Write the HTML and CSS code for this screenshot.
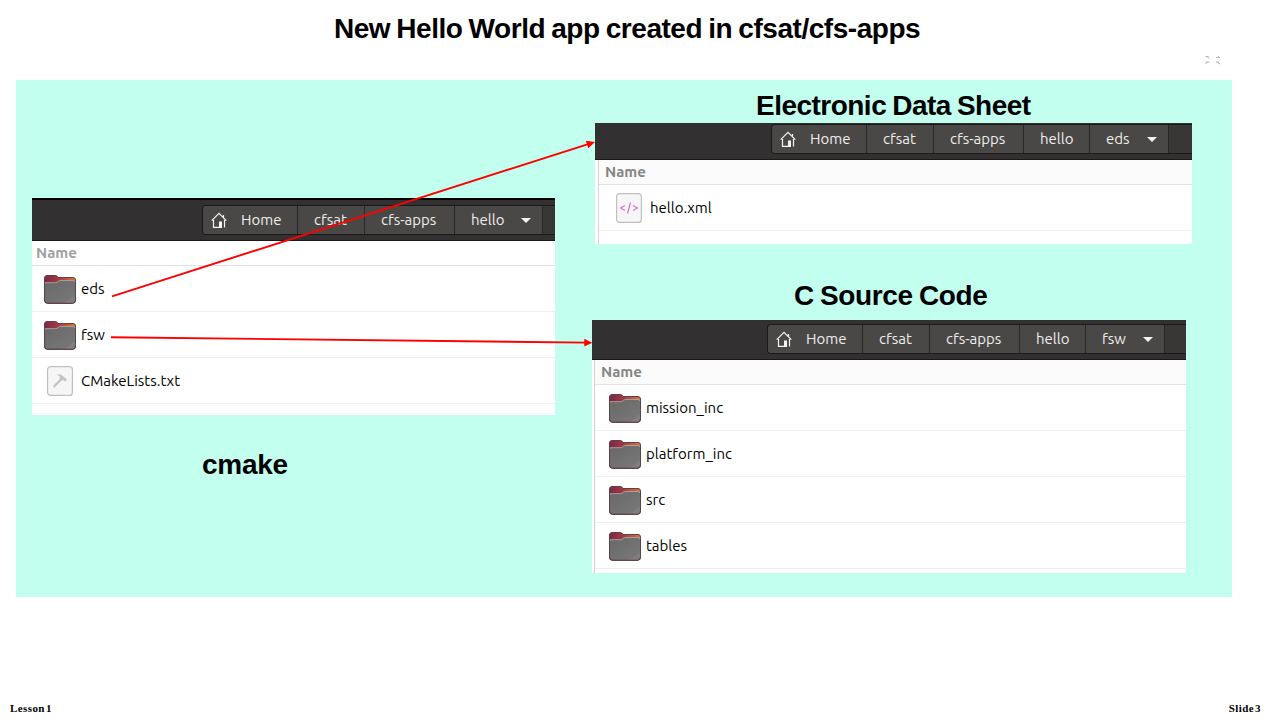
FILE: index.html
```
<!DOCTYPE html>
<html lang="en">
<head>
<meta charset="utf-8">
<title>New Hello World app</title>
<link rel="stylesheet" href="styles.css">
</head>
<body>
<svg class="defs" width="0" height="0">
  <defs>
    <linearGradient id="tab" x1="0" x2="1"><stop offset="0" stop-color="#7d2648"/><stop offset=".45" stop-color="#a33a42"/><stop offset="1" stop-color="#e8703a"/></linearGradient>
    <linearGradient id="front" x1="0" y1="0" x2="1" y2="1"><stop offset="0" stop-color="#686868"/><stop offset=".83" stop-color="#767676"/><stop offset=".84" stop-color="#808080"/><stop offset="1" stop-color="#7c7c7c"/></linearGradient>
    <symbol id="folder" viewBox="0 0 32 32">
      <path d="M.5 27V5Q.5 2.500 3 2.500H11.500Q13 2.500 14 4.500H29Q31.500 4.500 31.500 7V27Q31.500 30.300 28.500 30.300H3.500Q.5 30.300 .5 27Z" fill="url(#tab)" stroke="#5b4247"/>
      <path d="M1 27V9.500H11.500Q13 9.500 14.500 8Q15.500 7.300 17 7.300H29Q31 7.300 31 9V27Q31 29.800 28.500 29.800H3.500Q1 29.800 1 27Z" fill="url(#front)"/>
      <path d="M1.300 11V9.700H11.500Q13 9.700 14.500 8.200Q15.500 7.500 17 7.500H29Q30.800 7.500 30.800 9" fill="none" stroke="#aaa69f" stroke-width=".9"/>
      <path d="M.5 9V27Q.5 30.300 3.500 30.300H28.500Q31.500 30.300 31.500 27V9" fill="none" stroke="#554448"/>
    </symbol>
    <symbol id="home" viewBox="0 0 16 16">
      <path d="M.7 8.700 8 1.400 15.300 8.700M2.500 8V15.300H9M13.500 8V15.500M12.500 3V5.500" fill="none" stroke="#f4f4f3" stroke-width="1.200"/>
      <path d="M8 9.500H11V16H8Z" fill="#f4f4f3"/>
    </symbol>
    <symbol id="doc" viewBox="0 0 26 30">
      <rect x=".6" y=".6" width="24.800" height="28.800" rx="3" fill="#f6f6f6" stroke="#c0c0c0" stroke-width="1.200"/>
    </symbol>
  </defs>
</svg>
<h1 class="title">New Hello World app created in cfsat/cfs-apps</h1>
<svg class="expand" width="18" height="10" viewBox="0 0 18 10" fill="none" stroke="#b5b5b5"><path d="M1.500 1.500H4.500M3.500 2.500 5.500 3.500M12 2.500H15M14 1 16 3M1.500 7H5.500M1.500 8.500 3.500 7.500M12 7H15M13 7.500 16 9"/></svg>
<main class="board">
  <div class="col-left">
    <section class="files main">
      <header class="bar"><nav class="path">
        <span class="crumb home"><svg width="16" height="16"><use href="#home"/></svg>Home</span><span class="crumb cfsat">cfsat</span><span class="crumb apps">cfs-apps</span><span class="crumb last">hello<i class="caret"></i></span>
      </nav></header>
      <div class="list">
        <div class="name">Name</div>
        <div class="row"><svg class="ico" width="32" height="32"><use href="#folder"/></svg><span>eds</span></div>
        <div class="row"><svg class="ico" width="32" height="32"><use href="#folder"/></svg><span>fsw</span></div>
        <div class="row"><svg class="ico" width="32" height="30" viewBox="0 0 32 30"><use href="#doc" x="3" width="26" height="30"/><path d="M9.500 21 17 13.500" stroke="#c4c4c4" stroke-width="2.400"/><path d="M12.500 8.500H17L23 13.500 21 15.800 19.300 14 17.600 14.700 15.300 12.300 16 10.800Z" fill="#c4c4c4"/></svg><span>CMakeLists.txt</span></div>
      </div>
    </section>
    <h2 class="label cmake">cmake</h2>
  </div>
  <div class="col-right">
    <h2 class="label sheet">Electronic Data Sheet</h2>
    <section class="files eds">
      <header class="bar"><nav class="path">
        <span class="crumb home"><svg width="16" height="16"><use href="#home"/></svg>Home</span><span class="crumb cfsat">cfsat</span><span class="crumb apps">cfs-apps</span><span class="crumb hello">hello</span><span class="crumb last">eds<i class="caret"></i></span>
      </nav></header>
      <div class="list">
        <div class="name">Name</div>
        <div class="row"><svg class="ico" width="32" height="30" viewBox="0 0 32 30"><use href="#doc" x="3" width="26" height="30"/><path d="M12 12.500 7.500 15 12 17.500M20 12.500 24.500 15 20 17.500M17.500 9.500 14.500 20.500" fill="none" stroke="#dc6fd0" stroke-width="1.200"/></svg><span>hello.xml</span></div>
      </div>
    </section>
    <h2 class="label source">C Source Code</h2>
    <section class="files src">
      <header class="bar"><nav class="path">
        <span class="crumb home"><svg width="16" height="16"><use href="#home"/></svg>Home</span><span class="crumb cfsat">cfsat</span><span class="crumb apps">cfs-apps</span><span class="crumb hello">hello</span><span class="crumb last">fsw<i class="caret"></i></span>
      </nav></header>
      <div class="list">
        <div class="name">Name</div>
        <div class="row"><svg class="ico" width="32" height="32"><use href="#folder"/></svg><span>mission_inc</span></div>
        <div class="row"><svg class="ico" width="32" height="32"><use href="#folder"/></svg><span>platform_inc</span></div>
        <div class="row"><svg class="ico" width="32" height="32"><use href="#folder"/></svg><span>src</span></div>
        <div class="row"><svg class="ico" width="32" height="32"><use href="#folder"/></svg><span>tables</span></div>
      </div>
    </section>
  </div>
  <svg class="arrows" width="1216" height="518" viewBox="16 80 1216 518"><path d="M112 296.300 589 143.800M111 337.300 586 342.600" fill="none" stroke="#f00" stroke-width="1.900"/><path d="M595 142 585.800 140.700 588.300 148.200ZM592.300 342.700 584.300 338.700V346.600Z" fill="#f00"/></svg>
</main>
<footer class="foot"><span class="lesson">Lesson 1</span><span class="slide">Slide 3</span></footer>
</body>
</html>
```
FILE: styles.css
```
* { box-sizing: border-box; }
body { margin: 0; width: 1280px; height: 720px; overflow: hidden; background: #fff; display: flex; flex-direction: column; color: #000; font-family: "Liberation Sans", Arial, sans-serif; }
.defs { position: absolute; }
h1, h2 { margin: 0; font-weight: bold; white-space: nowrap; }
.title { height: 55px; padding: 13px 0 0 334px; font-size: 28px; line-height: 32px; letter-spacing: -.46px; word-spacing: -1.2px; }
.expand { display: block; margin: 0 0 15px 1204px; flex: none; }
.board { position: relative; flex: none; width: 1216px; height: 517px; background: #c2ffef; display: grid; grid-template-columns: 560px 656px; margin-left: 16px; }
.col-left { padding: 118px 0 0 16px; }
.label { font-size: 28px; line-height: 32px; word-spacing: -1.2px; }
.cmake { margin: 34px 0 0 170px; letter-spacing: -.25px; }
.sheet { padding: 10px 0 0 180px; height: 43px; letter-spacing: -.52px; }
.source { padding: 36px 0 0 218px; height: 76px; letter-spacing: -.38px; }
.files { font-family: Ubuntu, "Noto Sans", sans-serif; font-size: 15px; background: #fff; display: flex; flex-direction: column; overflow: hidden; }
.main { width: 523px; height: 217px; }
.eds { width: 597px; height: 121px; margin-left: 19px; }
.src { width: 594px; height: 253px; margin-left: 16px; }
.bar { flex: none; background: #323031; border-bottom: 1px solid #1c181a; display: flex; align-items: flex-start; }
.main .bar { height: 43px; border-top: 2px solid #000; padding: 5px 0 0 170px; }
.eds .bar { height: 37px; padding: 1px 0 0 176px; }
.src .bar { height: 40px; padding: 4px 0 0 175px; }
.path { flex: 1; height: 30px; display: flex; background: #393735; border: 1px solid #1b1a19; border-right: 0; border-radius: 4px 0 0 4px; overflow: hidden; }
.crumb { display: flex; align-items: center; padding: 0 0 1px 16px; height: 28px; background: #4a4846; border-right: 1px solid #292827; color: #eeeeec; white-space: nowrap; line-height: 20px; }
.home { width: 95px; padding-left: 8px; gap: 14px; }
.home svg { flex: none; margin-top: 1px; }
.cfsat { width: 67px; }
.apps { width: 90px; }
.hello { width: 66px; }
.last { width: 79px; justify-content: space-between; padding-right: 11px; }
.main .last { width: 88px; }
.caret { width: 10px; height: 5px; background: #f4f4f3; clip-path: polygon(0 0, 100% 0, 50% 100%); margin-top: 2px; }
.list { flex: 1; }
.eds .list { border-left: 1px solid #d2d2d2; margin-left: 3px; }
.src .list { border-left: 1px solid #d2d2d2; margin-left: 2px; }
.name { height: 25px; border-bottom: 1px solid #e3e3e3; background: #fbfbfb; color: #858583; font-weight: bold; line-height: 24px; padding-left: 6px; }
.main .name { background: #fff; color: #a1a09f; padding-left: 4px; }
.row { height: 46px; border-bottom: 1px solid #f0f0f0; display: flex; align-items: center; gap: 5px; padding: 1px 0 0 14px; line-height: 20px; white-space: nowrap; }
.main .row { padding-left: 12px; }
.row span { margin-top: -1px; }
.ico { flex: none; }
.arrows { position: absolute; left: 0; top: 0; pointer-events: none; }
.foot { margin-top: auto; height: 20px; padding: 2px 19px 0 10px; display: flex; justify-content: space-between; font: bold 11px/13px "Liberation Serif", "Times New Roman", serif; }
.lesson, .slide { letter-spacing: .4px; word-spacing: -2px; }
```
